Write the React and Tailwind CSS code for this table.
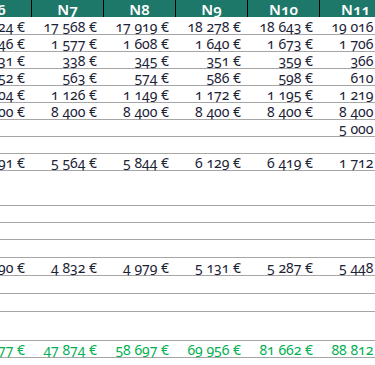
const cols = ["N6", "N7", "N8", "N9", "N10", "N11", "N12"];

const rows = [
  { h: "h-[18px]", v: ["17 224 €", "17 568 €", "17 919 €", "18 278 €", "18 643 €", "19 016 €", ""] },
  { h: "h-[17px]", v: ["1 546 €", "1 577 €", "1 608 €", "1 640 €", "1 673 €", "1 706 €", ""] },
  { h: "h-[17px]", v: ["331 €", "338 €", "345 €", "351 €", "359 €", "366 €", ""] },
  { h: "h-[17px]", v: ["552 €", "563 €", "574 €", "586 €", "598 €", "610 €", ""] },
  { h: "h-[17px]", v: ["1 104 €", "1 126 €", "1 149 €", "1 172 €", "1 195 €", "1 219 €", ""] },
  { h: "h-[17px]", v: ["8 400 €", "8 400 €", "8 400 €", "8 400 €", "8 400 €", "8 400 €", ""] },
  { h: "h-[17px]", v: ["", "", "", "", "", "5 000 €", ""] },
  { h: "h-[17px]", v: [] },
  { h: "h-[17px]", v: ["5 291 €", "5 564 €", "5 844 €", "6 129 €", "6 419 €", "1 712 €", ""] },
  { h: "h-[35px]", v: [] },
  { h: "h-[17px]", v: [] },
  { h: "h-[17px]", v: [] },
  { h: "h-[18px]", v: [] },
  { h: "h-[18px]", v: ["4 690 €", "4 832 €", "4 979 €", "5 131 €", "5 287 €", "5 448 €", ""] },
  { h: "h-[18px]", v: [] },
  { h: "h-[18px]", v: [] },
  { h: "h-[29px]", v: [] },
  { h: "h-[17px]", v: ["37 477 €", "47 874 €", "58 697 €", "69 956 €", "81 662 €", "88 812 €", ""], total: true },
];

export default function App() {
  return (
    <div className="w-[375px] h-[365px] overflow-hidden bg-white font-['Noto_Sans',sans-serif] text-[14px] oldstyle-nums">
      <div className="ml-[-40px] w-[504px]">
        <div className="flex h-[17px] bg-[#1e786a] text-white text-[15px] font-semibold">
          {cols.map((c) => (
            <div key={c} className="w-[72px] shrink-0 border-r border-black flex items-center justify-center leading-none pt-[1px]">
              {c}
            </div>
          ))}
        </div>
        {rows.map((r, i) => (
          <div key={i} className={`flex ${r.h} border-b border-[#a6a6a6] ${r.total ? "text-[#00b050]" : "text-[#1b2236]"}`}>
            {cols.map((c, j) => (
              <div key={c} className="w-[72px] shrink-0 flex items-center justify-end pr-[7px] pt-[2px] leading-none whitespace-nowrap">
                {r.v[j] || ""}
              </div>
            ))}
          </div>
        ))}
      </div>
    </div>
  );
}
